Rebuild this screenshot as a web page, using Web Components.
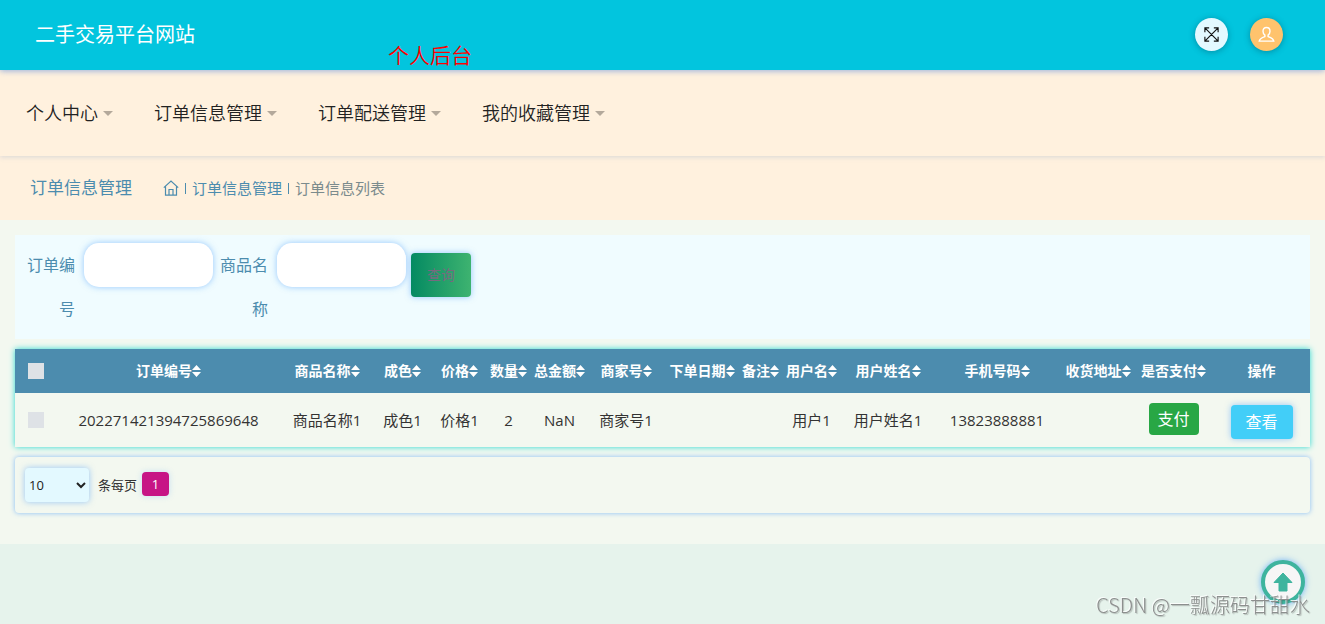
<!DOCTYPE html>
<html lang="zh-CN">
<head>
<meta charset="utf-8">
<title>二手交易平台网站</title>
<style>
html { background: #e6f3ec; }
body {
  margin: 0;
  background: #e6f3ec;
  color: #333;
  font: 400 15px/24px "Open Sans", "Noto Sans CJK SC", sans-serif;
}
</style>
</head>
<body>
<market-app></market-app>
<script>
function define(name, html, setup) {
  const template = document.createElement('template');
  template.innerHTML = html;
  customElements.define(name, class extends HTMLElement {
    constructor() {
      super();
      this.attachShadow({ mode: 'open' }).append(template.content.cloneNode(true));
    }
    connectedCallback() {
      if (setup) setup(this, this.shadowRoot);
    }
  });
}

define('site-header', `
<style>
:host { display: flex; align-items: center; position: relative; z-index: 2; height: 70px; padding: 0 42px 0 35px;
  background: #02c5de; box-shadow: 0 1px 6px rgba(80, 130, 220, .6); }
h1 { margin: 0; font-size: 20px; font-weight: 400; line-height: 30px; color: #fff; }
.area { align-self: flex-end; margin-left: 193px; font-size: 21px; font-weight: 350; line-height: 29px; color: #f00; }
.tools { display: flex; gap: 22px; margin: 0 0 2px auto; }
button { display: grid; place-items: center; width: 33px; height: 33px; padding: 0; border: 0; border-radius: 50%;
  background: #e3f9ff; color: #111; box-shadow: 0 1px 6px rgba(0, 60, 80, .4); }
.user { background: #ffc36d; color: #fff; }
svg { width: 17px; height: 17px; fill: none; stroke: currentColor; }
</style>
<h1>二手交易平台网站</h1>
<span class="area">个人后台</span>
<div class="tools">
  <button aria-label="全屏"><svg viewBox="0 0 18 18"><path stroke-width="1.2" d="M2 2l14 14M16 2L2 16M2 6.500V2h4.500M11.500 2H16v4.500M16 11.500V16h-4.500M6.500 16H2v-4.500"/></svg></button>
  <button class="user" aria-label="个人中心"><svg viewBox="0 0 18 18"><path stroke-width="1.500" d="M9 1.500c2.500 0 3.700 1.700 3.700 4 0 1.600-.9 3.300-2 4.200v1.500c2.700.9 5.500 2.100 6 4.800H1.300c.5-2.700 3.300-3.900 6-4.800V9.700c-1.100-.9-2-2.600-2-4.200 0-2.300 1.200-4 3.700-4z"/></svg></button>
</div>`);

define('nav-item', `
<style>
:host { display: block; }
a { display: flex; align-items: center; gap: 5px; color: #222; font-size: 18px; font-weight: 350; line-height: 30px; text-decoration: none; white-space: nowrap; }
i { border: 5px solid transparent; border-top-color: #b4a99b; border-bottom: 0; }
</style>
<a href="#"><slot></slot><i></i></a>`);

define('main-nav', `
<style>
:host { display: block; position: relative; z-index: 1; background: #fff1de; box-shadow: 0 1px 5px rgba(100, 140, 200, .25); }
nav { display: flex; gap: 41px; padding: 28px 26px; }
</style>
<nav>
  <nav-item>个人中心</nav-item>
  <nav-item>订单信息管理</nav-item>
  <nav-item>订单配送管理</nav-item>
  <nav-item>我的收藏管理</nav-item>
</nav>`);

define('page-trail', `
<style>
:host { display: flex; align-items: center; gap: 31px; height: 64px; padding: 0 30px; background: #fff1de; color: #4c8cae; }
h2 { margin: 0; font-size: 17px; font-weight: 400; line-height: 24px; }
nav { display: flex; align-items: center; gap: 6px; font-size: 15px; line-height: 24px; }
a { display: flex; color: inherit; text-decoration: none; }
svg { width: 16px; height: 16px; fill: none; stroke: currentColor; stroke-width: 1.2; }
i { width: 1px; height: 11px; background: currentColor; }
.here { color: #7b8b8d; }
</style>
<h2>订单信息管理</h2>
<nav aria-label="路径">
  <a href="#" aria-label="首页"><svg viewBox="0 0 16 16"><path d="M.8 7.600L8 1l7.200 6.600M2.500 6.200v9h11v-9M6 15V9.500h4V15"/></svg></a>
  <i></i><a href="#">订单信息管理</a><i></i><span class="here">订单信息列表</span>
</nav>`);

define('search-field', `
<style>
:host { display: flex; gap: 9px; }
label { width: 50px; text-align: right; font-size: 16px; line-height: 44px; color: #4c8cae; }
input { box-sizing: border-box; width: 129px; height: 44px; padding: 0 12px; border: 0; border-radius: 15px; background: #fff;
  font: inherit; box-shadow: 0 0 6px rgba(60, 150, 250, .5); outline: 0; }
</style>
<label for="field"></label><input id="field" type="text">`,
(host, root) => { root.querySelector('label').textContent = host.getAttribute('label'); });

define('search-panel', `
<style>
:host { display: block; background: #f0fcff; }
form { display: flex; align-items: flex-start; padding: 8px 10px; gap: 5px; }
button { width: 60px; height: 44px; margin: 10px 0 0; padding: 0; border: 0; border-radius: 4px; color: #776a80;
  background: linear-gradient(90deg, #048a62, #3eb370); font: inherit; font-size: 14px; box-shadow: 0 0 6px rgba(60, 150, 250, .5); }
</style>
<form>
  <search-field label="订单编号"></search-field>
  <search-field label="商品名称"></search-field>
  <button type="button">查询</button>
</form>`);

define('order-table', `
<style>
:host { display: block; box-shadow: 0 0 6px #26d8d0; }
table { width: 100%; table-layout: fixed; border-collapse: collapse; text-align: center; white-space: nowrap; background: #f3f8f0; }
th, td { padding: 0; }
th { height: 44px; background: #4c8cae; color: #fff; font-size: 14px; font-weight: 700; line-height: 20px; }
td { height: 54px; font-size: 15px; line-height: 24px; }
svg { width: 9px; height: 12px; fill: #fff; vertical-align: -1px; }
input { display: block; appearance: none; width: 16px; height: 16px; margin: 0 0 0 13px; background: #dee2e6; }
button { display: block; margin: 0 auto; padding: 0; border: 0; border-radius: 4px; color: #fff; font: inherit; font-size: 16px; }
.pay { width: 50px; height: 32px; margin-bottom: 2px; background: #28a745; }
.view { width: 62px; height: 34px; margin-top: 4px; background: #42cef8; box-shadow: 0 0 6px rgba(60, 150, 250, .5); }
</style>
<table>
  <colgroup></colgroup>
  <thead><tr><th><input type="checkbox" aria-label="全选"></th></tr></thead>
  <tbody><tr><td><input type="checkbox" aria-label="选择订单"></td></tr></tbody>
</table>`,
(host, root) => {
  const columns = [
    ['订单编号', 223, '202271421394725869648'], ['商品名称', 94, '商品名称1'], ['成色', 57, '成色1'],
    ['价格', 57, '价格1'], ['数量', 41, '2'], ['总金额', 61, 'NaN'], ['商家号', 72, '商家号1'],
    ['下单日期', 80, ''], ['备注', 37, ''], ['用户名', 65, '用户1'], ['用户姓名', 88, '用户姓名1'],
    ['手机号码', 130, '13823888881'], ['收货地址', 72, ''],
    ['是否支付', 79, '<button class="pay">支付</button>'], ['操作', 97, '<button class="view">查看</button>']
  ];
  const sort = '<svg viewBox="0 0 9 12"><path d="M4.500 0L9 5H0zM0 7h9l-4.500 5z"/></svg>';
  root.querySelector('colgroup').innerHTML = '<col style="width:42px">' +
    columns.map(c => `<col style="width:${c[1]}px">`).join('');
  root.querySelector('thead tr').insertAdjacentHTML('beforeend',
    columns.map(c => `<th>${c[0]}${c[0] === '操作' ? '' : sort}</th>`).join(''));
  root.querySelector('tbody tr').insertAdjacentHTML('beforeend',
    columns.map(c => `<td>${c[2]}</td>`).join(''));
});

define('page-bar', `
<style>
:host { display: flex; align-items: center; gap: 9px; padding: 11px 10px; border-radius: 4px; background: #f3f8f0;
  box-shadow: 0 0 5px rgba(60, 150, 250, .6); font-size: 13px; line-height: 20px; }
select { width: 64px; height: 34px; padding: 0; border: 0; border-radius: 4px; background: #e3f9ff; color: #222; font: inherit;
  box-shadow: 0 0 6px rgba(60, 150, 250, .5); }
.pages { display: flex; align-items: center; gap: 5px; }
button { width: 27px; height: 24px; padding: 0; border: 0; border-radius: 4px; background: #c71585; color: #fff;
  font: inherit; margin-bottom: 2px; box-shadow: 0 0 6px rgba(60, 150, 250, .25); }
</style>
<select id="size" aria-label="每页条数"><option>10</option></select>
<div class="pages"><label for="size">条每页</label><button>1</button></div>`);

define('back-to-top', `
<style>
:host { display: block; position: fixed; right: 20px; bottom: 20px; }
button { display: grid; place-items: center; width: 44px; height: 44px; padding: 0; border: 4px solid #3eb49e; border-radius: 50%;
  background: #f6f6f6; box-shadow: 0 0 6px rgba(60, 150, 250, .7); }
svg { width: 20px; height: 20px; fill: #3eb49e; stroke: #3eb49e; stroke-linejoin: round; }
</style>
<button aria-label="回到顶部"><svg viewBox="0 0 20 20"><path d="M10 1l9 9.500h-5V19H6v-8.500H1z"/></svg></button>`);

define('water-mark', `
<style>
:host { display: block; position: fixed; right: 15px; bottom: 4px; font-size: 20px; font-weight: 300; line-height: 30px; white-space: nowrap;
  font-family: "Noto Sans CJK SC", sans-serif; color: #8c8f8e; text-shadow: -1px -1px 0 rgba(255, 255, 255, .8), 1px 1px 1px rgba(60, 60, 60, .3); }
</style>
<slot></slot>`);

define('market-app', `
<style>
:host { display: block; }
main { display: flex; flex-direction: column; gap: 10px; padding: 15px 15px 31px; background: #f3f8f0; }
</style>
<site-header></site-header>
<main-nav></main-nav>
<page-trail></page-trail>
<main>
  <search-panel></search-panel>
  <order-table></order-table>
  <page-bar></page-bar>
</main>
<back-to-top></back-to-top>
<water-mark>CSDN @一瓢源码甘甜水</water-mark>`);
</script>
</body>
</html>
